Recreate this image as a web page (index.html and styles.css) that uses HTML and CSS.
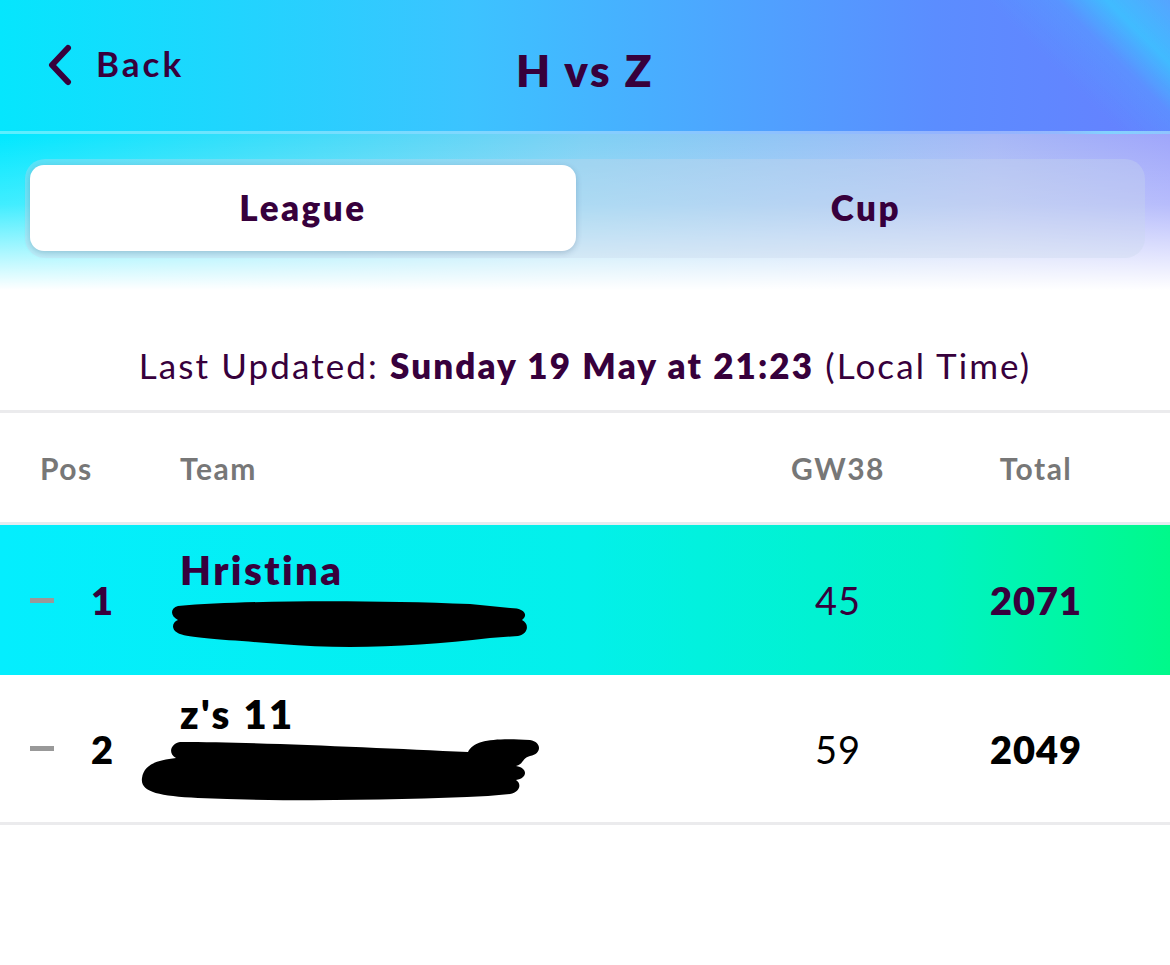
FILE: index.html
```html
<!DOCTYPE html>
<html>
<head>
    <meta charset="UTF-8">
    <title>H vs Z</title>
    <link rel="stylesheet" href="styles.css">
</head>
<body>
    <div class="top">
        <div class="header">
            <a class="back">
                <svg width="30" height="42" viewBox="0 0 30 42"><path d="M24 4 L8 21 L24 38" fill="none" stroke="#37003c" stroke-width="6" stroke-linecap="round" stroke-linejoin="round"/></svg>
                <span>Back</span>
            </a>
            <h1>H vs Z</h1>
        </div>
        <div class="tabs-area">
            <div class="tabs">
                <div class="tab active">League</div>
                <div class="tab">Cup</div>
            </div>
        </div>
    </div>

    <p class="updated">Last Updated: <b>Sunday 19 May at 21:23</b> (Local Time)</p>

    <div class="table">
        <div class="row head">
            <div class="pos">Pos</div>
            <div class="team">Team</div>
            <div class="gw">GW38</div>
            <div class="total">Total</div>
        </div>
        <div class="row entry mine">
            <div class="pos"><span class="dash"></span><span class="num">1</span></div>
            <div class="team">
                <div class="name">Hristina</div>
                <svg class="scribble" width="380" height="50" viewBox="0 0 380 50"><path d="M8 8 C80 2 200 2 300 6 L340 10 C356 10 358 18 352 22 C360 26 358 36 348 38 L320 40 C250 48 180 52 110 46 C60 42 20 40 10 36 C0 32 2 24 8 22 C0 18 0 10 8 8 Z" fill="#000"/></svg>
            </div>
            <div class="gw">45</div>
            <div class="total">2071</div>
        </div>
        <div class="row entry">
            <div class="pos"><span class="dash"></span><span class="num">2</span></div>
            <div class="team">
                <div class="name">z's 11</div>
                <svg class="scribble two" width="410" height="66" viewBox="0 0 410 66"><path d="M42 6 C120 6 240 12 330 16 C336 4 356 2 392 4 C404 6 404 18 392 20 C384 22 386 28 378 30 C390 32 390 42 378 44 C384 48 382 56 372 58 L350 60 C260 64 160 66 60 62 C20 60 2 56 4 42 C6 28 20 24 38 22 C30 18 32 8 42 6 Z" fill="#000"/></svg>
            </div>
            <div class="gw">59</div>
            <div class="total">2049</div>
        </div>
    </div>
</body>
</html>
```
FILE: styles.css
```css
body {
    margin: 0;
    background: #fff;
    font-family: Lato, "Noto Sans", sans-serif;
    color: #37003c;
}
.top {
    background: linear-gradient(90deg, #05e6fd 0%, #3cc3ff 40%, #5b8dff 80%, #6680ff 100%);
}
.header {
    height: 131px;
    display: flex;
    align-items: center;
    justify-content: center;
    position: relative;
    border-bottom: 3px solid rgba(255, 255, 255, 0.35);
    background: linear-gradient(225deg, rgba(70, 200, 255, 0.5) 0px, rgba(40, 225, 255, 0.6) 45px, rgba(60, 200, 255, 0.2) 80px, rgba(60, 200, 255, 0) 130px);
}
.back {
    position: absolute;
    left: 44px;
    top: 44px;
    display: flex;
    align-items: center;
    gap: 22px;
    font-size: 35px;
    font-weight: 700;
    letter-spacing: 3px;
}
.back span {
    margin-top: -4px;
}
h1 {
    margin: 0;
    font-size: 44px;
    font-weight: 800;
    letter-spacing: 2.5px;
    padding-top: 8px;
}
.tabs-area {
    height: 156px;
    padding: 25px 25px 0;
    box-sizing: border-box;
    background: linear-gradient(180deg, rgba(255,255,255,0) 0%, rgba(255,255,255,0.25) 45%, #fff 100%),
        linear-gradient(90deg, #00e8ff 0%, #7ed0f4 50%, #a7b8f6 85%, #9fa6fb 100%);
}
.tabs {
    display: flex;
    height: 99px;
    padding: 6px 5px 7px;
    box-sizing: border-box;
    border-radius: 20px;
    background: rgba(200, 215, 235, 0.35);
}
.tab {
    flex: 1;
    display: flex;
    align-items: center;
    justify-content: center;
    font-size: 35px;
    font-weight: 800;
    letter-spacing: 2.5px;
    padding: 0 0 2px 16px;
}
.tab.active {
    flex: none;
    width: 546px;
    padding-left: 0;
    background: #fff;
    border-radius: 14px;
    box-shadow: 0 2px 6px rgba(0, 40, 80, 0.2);
}
.updated {
    margin: 0;
    height: 123px;
    box-sizing: border-box;
    padding-top: 54px;
    text-align: center;
    font-size: 35px;
    font-weight: 400;
    letter-spacing: 2.1px;
    border-bottom: 3px solid #ebebed;
}
.updated b {
    font-weight: 800;
}
.row {
    display: flex;
    align-items: center;
    border-bottom: 3px solid #ebebed;
}
.row .pos {
    width: 180px;
    padding-left: 40px;
    box-sizing: border-box;
    display: flex;
    align-items: center;
}
.row .team {
    flex: 1;
}
.row .gw {
    width: 120px;
    text-align: center;
    margin-right: 78px;
}
.row .total {
    width: 120px;
    text-align: center;
    margin-right: 74px;
}
.head {
    height: 109px;
    color: #777;
    font-size: 30px;
    font-weight: 700;
    letter-spacing: 1.5px;
    border-bottom-color: #e4ecf0;
}
.entry {
    height: 147px;
    font-size: 38px;
    letter-spacing: 1px;
}
.entry .pos {
    padding-left: 30px;
}
.dash {
    width: 24px;
    height: 5px;
    background: #999;
    margin-right: 37px;
}
.num {
    font-weight: 800;
}
.entry .gw {
    font-weight: 400;
}
.entry .total {
    font-weight: 800;
}
.mine {
    height: 150px;
    border-bottom: none;
    background: linear-gradient(90deg, #04eefe 0%, #03f0ea 50%, #00f3c5 80%, #00f98a 100%);
}
.name {
    font-size: 40px;
    font-weight: 800;
    letter-spacing: 2.4px;
    margin-top: -6px;
}
.scribble {
    display: block;
    margin: 4px 0 0 -10px;
}
.entry:not(.mine) {
    color: #000;
}
.scribble.two {
    margin: -2px 0 0 -42px;
}
```
